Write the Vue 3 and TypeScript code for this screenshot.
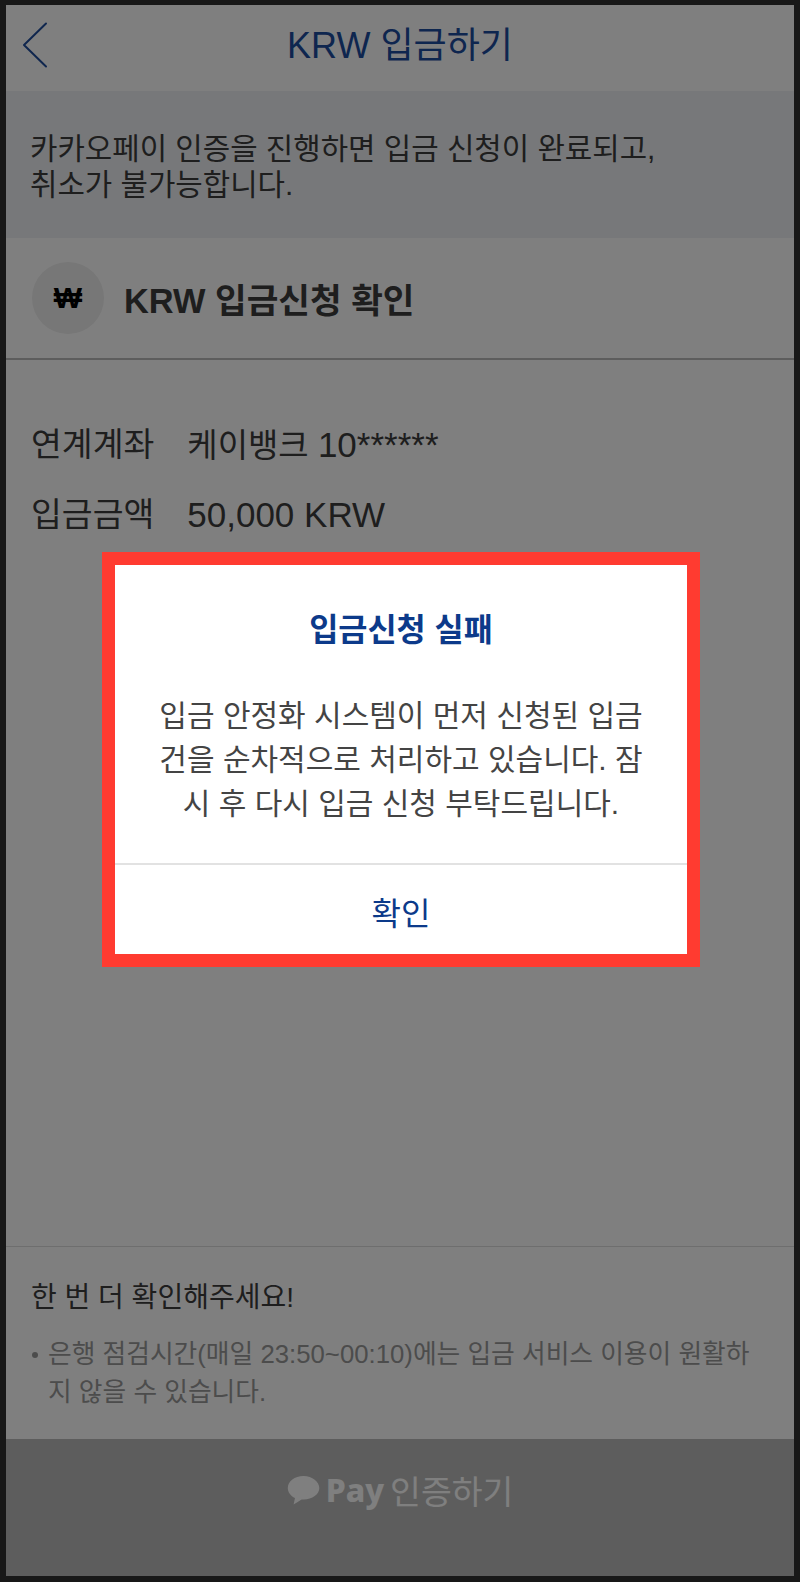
<script setup lang="ts">
interface Row { label: string; ko: string; en: string }
const rows: Row[] = [
  { label: '연계계좌', ko: '케이뱅크 ', en: '10******' },
  { label: '입금금액', ko: '', en: '50,000 KRW' },
]
</script>

<template>
  <div class="frame">
    <div class="page">
      <header class="top">
        <svg class="back" width="26" height="46" viewBox="0 0 26 46" fill="none">
        <path d="M24 1.500 L2 23 L24 44.500" stroke="#1f4c9c" stroke-width="2" stroke-linecap="round" stroke-linejoin="round" />
        </svg>
        <h1 class="title">KRW 입금하기</h1>
      </header>
      <section class="info">
        <p>카카오페이 인증을 진행하면 입금 신청이 완료되고,<br />취소가 불가능합니다.</p>
      </section>
      <section class="head">
        <div class="won">₩</div>
        <h2>KRW 입금신청 확인</h2>
      </section>
      <section class="details">
        <div v-for="row in rows" :key="row.label" class="row">
          <span class="label">{{ row.label }}</span>
          <span class="value">{{ row.ko }}<span class="latin">{{ row.en }}</span></span>
        </div>
      </section>
      <section class="notice">
        <h3>한 번 더 확인해주세요!</h3>
        <ul>
          <li>은행 점검시간(매일 23:50~00:10)에는 입금 서비스 이용이 원활하지 않을 수 있습니다.</li>
        </ul>
      </section>
      <footer class="pay">
        <svg width="33" height="30" viewBox="0 0 33 30">
          <path d="M16.500 1C7.700 1 .8 6.300.8 13c0 4.300 2.900 8 7.200 10.100L6.600 29.500l8-5.100c.6.100 1.300.1 1.900.1 8.800 0 15.800-5.200 15.800-11.500S25.300 1 16.500 1Z" fill="#fff" />
        </svg>
        <b class="pay-word">Pay</b>
        <span class="pay-text">인증하기</span>
      </footer>
      <div class="overlay"></div>
      <div class="modal" role="dialog">
        <h4>입금신청 실패</h4>
        <p>입금 안정화 시스템이 먼저 신청된 입금 건을 순차적으로 처리하고 있습니다. 잠시 후 다시 입금 신청 부탁드립니다.</p>
        <button type="button">확인</button>
      </div>
    </div>
  </div>
</template>

<style scoped>
.frame {
  box-sizing: border-box;
  width: 800px;
  height: 1582px;
  padding: 5px 6px 6px 6px;
  background: #181818;
  font-family: "Liberation Sans", "Noto Sans CJK KR", sans-serif;
}
.page {
  position: relative;
  display: flex;
  flex-direction: column;
  height: 100%;
  background: #fff;
  color: #3c3c3c;
  overflow: hidden;
}
.top {
  position: relative;
  display: flex;
  align-items: center;
  justify-content: center;
  flex: 0 0 86px;
  box-sizing: border-box;
  padding-bottom: 12px;
}
.back {
  position: absolute;
  left: 16px;
  top: 17px;
}
.title {
  margin: 0;
  font-size: 36px;
  font-weight: 400;
  color: #1c4c9e;
}
.info {
  flex: 0 0 147px;
  box-sizing: border-box;
  padding: 40px 24px 0;
  background: #eef1f4;
}
.info p {
  margin: 0;
  font-size: 29.8px;
  line-height: 36px;
}
.head {
  flex: 0 0 122px;
  display: flex;
  align-items: center;
  gap: 20px;
  padding-left: 26px;
  border-bottom: 2px solid #bbb;
  box-sizing: border-box;
}
.won {
  width: 72px;
  height: 72px;
  border-radius: 50%;
  background: #eee;
  color: #000;
  display: flex;
  align-items: center;
  justify-content: center;
  font-size: 30px;
  font-weight: 700;
}
.head h2 {
  margin: 0;
  font-size: 34.4px;
  font-weight: 700;
}
.details {
  flex: 1;
  padding: 50px 25px 0;
}
.row {
  display: flex;
  gap: 33px;
  height: 70px;
  font-size: 33.5px;
  line-height: 70px;
  align-items: center;
}
.value {
  font-size: 33px;
}
.latin {
  font-size: 35px;
}
.notice {
  border-top: 1px solid #ddd;
  flex: 0 0 193px;
  box-sizing: border-box;
  padding: 32px 25px 0;
}
.notice h3 {
  margin: 0 0 18px;
  font-size: 28px;
  line-height: 38px;
  font-weight: 400;
}
.notice ul {
  margin: 0;
  padding: 0;
  list-style: none;
}
.notice li {
  position: relative;
  padding-left: 17px;
  font-size: 25.75px;
  line-height: 38px;
  color: #999;
}
.notice li::before {
  content: "";
  position: absolute;
  left: 1px;
  top: 17px;
  width: 6px;
  height: 6px;
  border-radius: 50%;
  background: #999;
}
.pay {
  flex: 0 0 137px;
  display: flex;
  align-items: center;
  justify-content: center;
  gap: 6px;
  background: #bbb;
  color: #fff;
  padding-bottom: 36px;
  box-sizing: border-box;
}
.pay-word {
  font-family: "Noto Sans", sans-serif;
  font-size: 32px;
  font-weight: 800;
}
.pay-text {
  font-size: 33.5px;
}
.overlay {
  position: absolute;
  inset: 0;
  background: rgba(0, 0, 0, 0.5);
}
.modal {
  position: absolute;
  left: 96px;
  top: 547px;
  width: 598px;
  height: 415px;
  box-sizing: border-box;
  border: 13px solid #ff3b30;
  background: #fff;
  display: flex;
  flex-direction: column;
  align-items: center;
}
.modal h4 {
  margin: 45px 0 0;
  font-size: 31.7px;
  line-height: 40px;
  font-weight: 700;
  color: #0c3a8a;
}
.modal p {
  margin: 44px 0 0;
  width: 484px;
  font-size: 30px;
  line-height: 44px;
  text-align: center;
  color: #444;
}
.modal button {
  margin-top: auto;
  width: 100%;
  height: 91px;
  padding: 3px 0 0;
  border: 0;
  border-top: 2px solid #e2e2e2;
  background: #fff;
  font: inherit;
  font-size: 32px;
  color: #0c3a8a;
}
</style>

<style>
html,
body {
  margin: 0;
  background: #181818;
}
</style>
